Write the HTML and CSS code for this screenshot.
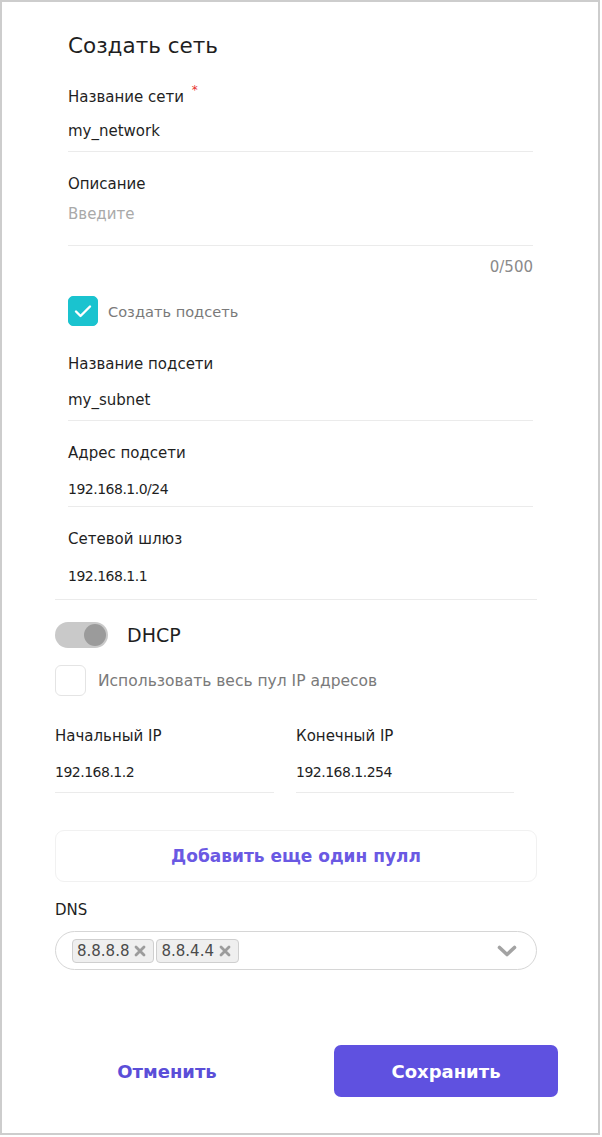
FILE: index.html
```html
<!DOCTYPE html>
<html lang="ru">
<head>
  <meta charset="UTF-8">
  <title>Создать сеть</title>
  <link rel="stylesheet" href="styles.css">
</head>
<body>
  <div class="frame">
    <div class="narrow">
      <h1 class="title">Создать сеть</h1>

      <div class="field first">
        <div class="field-label">Название сети <span class="required">*</span></div>
        <div class="field-input">my_network</div>
      </div>

      <div class="field">
        <div class="field-label">Описание</div>
        <div class="field-input textarea placeholder">Введите</div>
      </div>
      <div class="counter">0/500</div>

      <label class="check-row">
        <span class="checkbox checked">
          <svg width="18" height="14" viewBox="0 0 18 14"><path d="M2 7.5l4.5 4.5L16 2.5" fill="none" stroke="#fff" stroke-width="2.4" stroke-linecap="round" stroke-linejoin="round"/></svg>
        </span>
        <span class="check-text">Создать подсеть</span>
      </label>

      <div class="field">
        <div class="field-label">Название подсети</div>
        <div class="field-input">my_subnet</div>
      </div>

      <div class="field address">
        <div class="field-label">Адрес подсети</div>
        <div class="field-input num">192.168.1.0/24</div>
      </div>
    </div>

    <div class="wide">
      <div class="field gateway">
        <div class="field-label">Сетевой шлюз</div>
        <div class="field-input num">192.168.1.1</div>
      </div>

      <div class="toggle-row">
        <span class="toggle"><span class="knob"></span></span>
        <span class="toggle-text">DHCP</span>
      </div>

      <label class="check-row pool">
        <span class="checkbox"></span>
        <span class="check-text">Использовать весь пул IP адресов</span>
      </label>

      <div class="ip-grid">
        <div class="field">
          <div class="field-label">Начальный IP</div>
          <div class="field-input num">192.168.1.2</div>
        </div>
        <div class="field">
          <div class="field-label">Конечный IP</div>
          <div class="field-input num">192.168.1.254</div>
        </div>
      </div>

      <button type="button" class="add-pool">Добавить еще один пулл</button>

      <div class="field-label dns-label">DNS</div>
      <div class="select">
        <span class="tag">8.8.8.8
          <svg class="tag-x" width="12" height="12" viewBox="0 0 12 12"><path d="M2 2l8 8M10 2l-8 8" stroke="#9c9c9c" stroke-width="2.8" stroke-linecap="round"/></svg>
        </span>
        <span class="tag">8.8.4.4
          <svg class="tag-x" width="12" height="12" viewBox="0 0 12 12"><path d="M2 2l8 8M10 2l-8 8" stroke="#9c9c9c" stroke-width="2.8" stroke-linecap="round"/></svg>
        </span>
        <svg class="chevron" width="20" height="12" viewBox="0 0 20 12"><path d="M2.5 2.5L10 9.5l7.5-7" fill="none" stroke="#a3a3a3" stroke-width="3.6" stroke-linecap="round" stroke-linejoin="round"/></svg>
      </div>

      <div class="footer">
        <button type="button" class="btn-cancel">Отменить</button>
        <button type="button" class="btn-save">Сохранить</button>
      </div>
    </div>
  </div>
</body>
</html>
```

FILE: styles.css
```css
body {
  margin: 0;
  font-family: "DejaVu Sans", "Noto Sans", sans-serif;
  color: #1f1f1f;
  background: #fff;
}

.frame {
  box-sizing: border-box;
  width: 600px;
  height: 1135px;
  border: 2px solid #cdcdcd;
  padding-top: 32px;
}

.narrow {
  margin-left: 66px;
  width: 465px;
}

.wide {
  margin-left: 53px;
  width: 482px;
}

.title {
  margin: 0 0 29px;
  font-size: 21.5px;
  font-weight: 400;
  line-height: 24px;
}

.field {
  margin-bottom: 22px;
}

.field-label {
  font-size: 15px;
  font-weight: 500;
  line-height: 20px;
  margin-bottom: 10px;
}

.first .field-label {
  margin-bottom: 8px;
}

.required {
  color: #e8302f;
  font-size: 12px;
  line-height: 0;
  margin-left: 3px;
  vertical-align: 8px;
}

.field-input {
  font-size: 15px;
  line-height: 20px;
  padding: 6px 0 10px;
  border-bottom: 1px solid #ebebeb;
}

.field-input.num {
  font-size: 14px;
  letter-spacing: -0.5px;
}

.field-input.textarea {
  padding: 0 0 21px;
}

.placeholder {
  color: #a9a9a9;
}

.field:has(.textarea) {
  margin-bottom: 0;
}

.address .field-input {
  padding-bottom: 7px;
}

.counter {
  text-align: right;
  font-size: 15px;
  line-height: 20px;
  color: #8a8a8a;
  margin: 11px 0 19px;
}

.check-row {
  display: flex;
  align-items: center;
  gap: 10px;
  margin-bottom: 28px;
}

.checkbox {
  box-sizing: border-box;
  width: 30px;
  height: 30px;
  border-radius: 5px;
  border: 1px solid #e4e4e4;
  display: flex;
  align-items: center;
  justify-content: center;
}

.checkbox.checked {
  background: #1ac3cf;
  border-color: #1ac3cf;
}

.check-text {
  font-size: 14.6px;
  color: #7a7a7a;
}

.gateway .field-label,
.gateway .field-input {
  padding-left: 13px;
}

.gateway .field-input {
  padding-top: 7px;
  padding-bottom: 13px;
}

.toggle-row {
  display: flex;
  align-items: center;
  gap: 19px;
  margin-bottom: 17px;
}

.toggle {
  width: 53px;
  height: 26px;
  border-radius: 13px;
  background: #c9c9c9;
  display: flex;
  align-items: center;
  justify-content: flex-end;
  padding-right: 2px;
  box-sizing: border-box;
}

.knob {
  width: 22px;
  height: 22px;
  border-radius: 50%;
  background: #9b9b9b;
}

.toggle-text {
  font-size: 19px;
}

.check-row.pool {
  gap: 12px;
  margin-bottom: 30px;
}

.pool .checkbox {
  width: 31px;
  height: 31px;
  border-radius: 6px;
}

.pool .check-text {
  font-size: 15.5px;
}

.ip-grid {
  display: grid;
  grid-template-columns: 219px 218px;
  gap: 22px;
}

.ip-grid .field {
  margin-bottom: 37px;
}

.add-pool {
  display: block;
  width: 100%;
  height: 52px;
  background: #fff;
  border: 1px solid #f1f1f1;
  border-radius: 9px;
  font-family: inherit;
  font-size: 17px;
  font-weight: 700;
  color: #6a59e3;
  margin-bottom: 18px;
}

.dns-label {
  margin-bottom: 11px;
}

.select {
  box-sizing: border-box;
  height: 39px;
  border: 1px solid #d6d6d6;
  border-radius: 20px;
  display: flex;
  align-items: center;
  gap: 2px;
  padding: 0 19px 0 16px;
}

.tag {
  height: 24px;
  box-sizing: border-box;
  border: 1px solid #cfcfcf;
  background: #efefef;
  border-radius: 4px;
  padding: 0 7px 0 4px;
  font-size: 15px;
  line-height: 22px;
  color: #4b4b4b;
  display: flex;
  align-items: center;
  gap: 5px;
}

.chevron {
  margin-left: auto;
}

.footer {
  display: grid;
  grid-template-columns: 224px 224px;
  gap: 55px;
  margin-top: 75px;
}

.footer button {
  height: 52px;
  border: none;
  border-radius: 7px;
  font-family: inherit;
  font-size: 18px;
  font-weight: 700;
}

.btn-cancel {
  background: #fff;
  color: #5b4ed8;
}

.btn-save {
  background: #5f51e0;
  color: #fff;
}
```
